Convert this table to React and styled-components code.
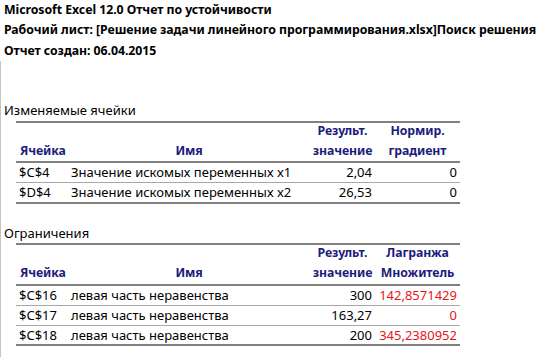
import React from 'react'
import styled, { createGlobalStyle } from 'styled-components'

const ROW = 20.25

const GlobalStyle = createGlobalStyle`
  html, body {
    margin: 0;
    background: #ffffff;
  }
  body {
    font-family: 'Noto Sans', 'Open Sans', sans-serif;
    font-size: 13px;
    color: #000000;
  }
`

const Sheet = styled.div`
  width: 549px;
  height: 357px;
  overflow: hidden;
  display: flex;
  flex-direction: column;
`

const TitleLine = styled.div`
  height: ${ROW}px;
  line-height: ${ROW}px;
  padding-left: 4px;
  font-weight: 700;
  font-size: 12.3px;
  letter-spacing: -0.05px;
  white-space: nowrap;
`

const Body = styled.div`
  flex: 1;
  display: flex;
  flex-direction: column;
  border-left: 1px solid #c4c4c4;
`

const Blank = styled.div`
  height: ${props => props.rows * ROW}px;
  flex: none;
`

const SectionTitle = styled.div`
  height: ${ROW - 1}px;
  line-height: ${ROW - 2}px;
  padding-left: 3px;
  white-space: nowrap;
`

const Grid = styled.div`
  margin-left: 15px;
  width: 444px;
  display: grid;
  grid-template-columns: 52px 242px 65px 85px;
  border-top: 2px solid #808080;
`

const HeadCell = styled.div`
  height: ${ROW * 2}px;
  box-sizing: border-box;
  border-bottom: 2px solid #808080;
  display: flex;
  flex-direction: column;
  justify-content: flex-end;
  align-items: ${props => (props.left ? 'flex-start' : 'center')};
  padding: ${props => (props.left ? '0 0 0 4px' : '0')};
  color: #1c1c7c;
  font-weight: 700;
  font-size: 12.3px;
  letter-spacing: -0.1px;
  line-height: ${ROW}px;
  white-space: nowrap;
`

const Cell = styled.div`
  height: ${ROW}px;
  box-sizing: border-box;
  border-bottom: ${props => (props.last ? '2px solid #808080' : '1px solid #a8a8a8')};
  line-height: ${props => (props.last ? ROW - 2 : ROW - 1)}px;
  padding: ${props => (props.num ? '0 3px 0 0' : '0 0 0 3px')};
  text-align: ${props => (props.num ? 'right' : 'left')};
  color: ${props => (props.red ? '#e8141c' : '#000000')};
  white-space: nowrap;
  overflow: hidden;
`

const changing = [
  { cell: '$C$4', name: 'Значение искомых переменных x1', value: '2,04', extra: '0' },
  { cell: '$D$4', name: 'Значение искомых переменных x2', value: '26,53', extra: '0' },
]

const constraints = [
  { cell: '$C$16', name: 'левая часть неравенства', value: '300', extra: '142,8571429' },
  { cell: '$C$17', name: 'левая часть неравенства', value: '163,27', extra: '0' },
  { cell: '$C$18', name: 'левая часть неравенства', value: '200', extra: '345,2380952' },
]

const Section = ({ title, heads, rows, red }) => (
  <>
    <SectionTitle>{title}</SectionTitle>
    <Grid>
      <HeadCell left>Ячейка</HeadCell>
      <HeadCell>Имя</HeadCell>
      <HeadCell>
        <span>{heads[0][0]}</span>
        <span>{heads[0][1]}</span>
      </HeadCell>
      <HeadCell>
        <span>{heads[1][0]}</span>
        <span>{heads[1][1]}</span>
      </HeadCell>
      {rows.map((r, i) => {
        const last = i === rows.length - 1
        return (
          <React.Fragment key={r.cell}>
            <Cell last={last}>{r.cell}</Cell>
            <Cell last={last}>{r.name}</Cell>
            <Cell last={last} num>{r.value}</Cell>
            <Cell last={last} num red={red}>{r.extra}</Cell>
          </React.Fragment>
        )
      })}
    </Grid>
  </>
)

const App = () => {
  return (
    <Sheet>
      <GlobalStyle />
      <TitleLine>Microsoft Excel 12.0 Отчет по устойчивости</TitleLine>
      <TitleLine>Рабочий лист: [Решение задачи линейного программирования.xlsx]Поиск решения</TitleLine>
      <TitleLine>Отчет создан: 06.04.2015</TitleLine>
      <Body>
        <Blank rows={2} />
        <Section
          title="Изменяемые ячейки"
          heads={[['Результ.', 'значение'], ['Нормир.', 'градиент']]}
          rows={changing}
        />
        <Blank rows={1} />
        <Section
          title="Ограничения"
          heads={[['Результ.', 'значение'], ['Лагранжа', 'Множитель']]}
          rows={constraints}
          red
        />
      </Body>
    </Sheet>
  )
}

export default App
